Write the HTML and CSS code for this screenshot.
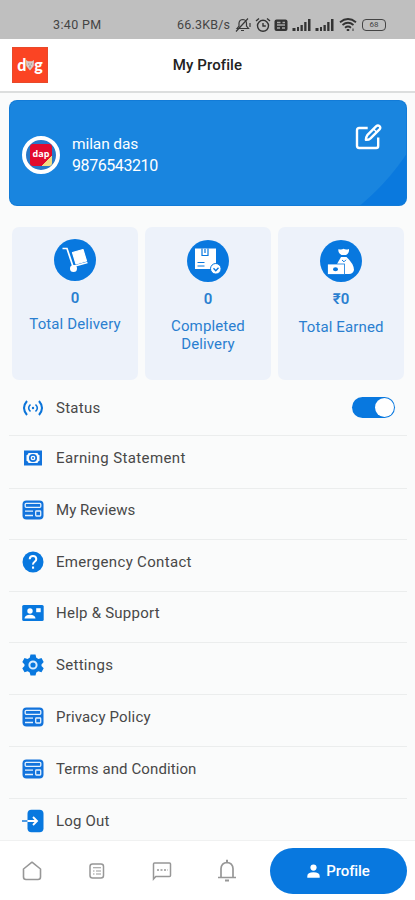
FILE: index.html
```html
<!DOCTYPE html>
<html lang="en">
<head>
<meta charset="utf-8">
<title>My Profile</title>
<link rel="stylesheet" href="styles.css">
</head>
<body>
<svg class="defs" width="0" height="0">
  <symbol id="signal" viewBox="0 0 19 13"><path d="M0 10h3v3H0zM4.500 9h2v4h-2zM8 7h2.300v6H8zM11.700 4H14v9h-2.300zM15.500 1h2.500v12h-2.500z" fill="#333"/></symbol>
  <symbol id="doc" viewBox="0 0 22 20"><rect x=".5" y=".5" width="21" height="19" rx="4" fill="#1273dc"/><g fill="none" stroke="#e4f1fd" stroke-width="1.300"><rect x="3.200" y="3.300" width="15.600" height="4" rx="1"/><path d="M3 11.200h8M3 15.500h8"/><rect x="13.700" y="11" width="5" height="5" rx=".7"/></g></symbol>
</svg>
<div class="phone">
  <div class="statusbar">
    <span class="clock">3:40 PM</span>
    <span class="speed">66.3KB/s</span>
    <div class="indicators">
      <svg width="17" height="16" viewBox="0 0 17 16" fill="none" stroke="#383838" stroke-width="1.200"><path d="M3 11.500 5 9V6q.5-3.500 4-3.500 3.500.2 3.500 4V9l2 2.500zM7 13.500h3M2 14.500 14 1.500M16 6v4"/></svg>
      <svg width="16" height="16" viewBox="0 0 16 16" fill="none" stroke="#333" stroke-width="1.400"><circle cx="8" cy="8.800" r="5.500"/><path d="M1 4 4 1.500M15 4 12 1.500M8 6v3h2.800"/></svg>
      <svg width="14" height="16" viewBox="0 0 14 16"><rect x=".5" y="2.500" width="13" height="11.500" rx="2" fill="#333"/><path d="M3 5.500h3.500M8.500 5.500H11M3 8h8M3 11h3M8 11h3" stroke="#aaa" stroke-width="1.300"/></svg>
      <svg width="20" height="13"><use href="#signal"/></svg>
      <svg width="20" height="13"><use href="#signal"/></svg>
      <svg width="18" height="15" viewBox="0 0 18 15" fill="none" stroke="#333" stroke-width="1.800"><path d="M1 5.200q8-6.500 16 0M3.500 8q5.500-4.500 11 0M6 10.700q3-2.400 6 0"/><path d="M9 12v2" stroke-width="2.500"/><path d="M14 11.500v2.500" stroke-width="1"/></svg>
      <div class="battery">68</div>
    </div>
  </div>
  <header class="header">
    <div class="logo"><span>d</span><svg width="8" height="12" viewBox="0 0 8 12"><path d="M0 1l2 1.200h4L8 1l-.3 6L4 11.500 .3 7z" fill="#d8c9c5"/><path d="M2.300 5h1M4.800 5h1M4 6.500v2" stroke="#6b5d5e" stroke-width=".8"/></svg><span>g</span></div>
    <h1>My Profile</h1>
  </header>
  <main>
    <section class="user">
      <div class="avatar"><div class="avatar-pic"><span>dap</span></div></div>
      <div class="who"><div class="name">milan das</div><div class="number">9876543210</div></div>
      <svg class="edit" width="28" height="28" viewBox="0 0 28 28" fill="none" stroke="#fff" stroke-width="2.400"><path d="M11.500 5H4.200Q2 5 2 7.200v15.600Q2 25 4.200 25h17q2 0 2-2v-7.200" stroke-linecap="square"/><path d="m12.300 12.200 9-9q1.600-1.500 3.200 0t0 3.200l-9 9q-1.800 1.700-4.600 1.500.1-3 1.400-4.700z" stroke-linejoin="round"/><path d="m18.500 6 3.300 3.300" stroke-width="1.300"/></svg>
    </section>
    <section class="stats">
      <article class="stat">
        <svg width="42" height="42" viewBox="0 0 42 42"><circle cx="21" cy="21" r="21" fill="#0878df"/><path d="m18.500 13.500 10.500-3 3.500 11.500-10.500 3z" fill="#fff" stroke="#fff" stroke-width="1.200" stroke-linejoin="round"/><path d="M8.500 9.500h4.500l6 18 14.500-4" fill="none" stroke="#fff" stroke-width="1.700"/><circle cx="19.500" cy="29.500" r="3.500" fill="#fff"/></svg>
        <strong>0</strong><p class="spread">Total Delivery</p>
      </article>
      <article class="stat mid">
        <svg width="42" height="42" viewBox="0 0 42 42"><circle cx="21" cy="21" r="21" fill="#0878df"/><path d="M8 8.500h21V29H8z" fill="#fff"/><path d="M15 8.500v7h6v-7M18 9v4" fill="none" stroke="#0878df" stroke-width="1.200"/><path d="M10.500 22.500h7M10.500 26h7" stroke="#0878df" stroke-width="1.200"/><circle cx="28.800" cy="28.800" r="5.300" fill="#fff" stroke="#0878df"/><path d="m26.500 28.300 2.300 2.500 2.700-3" fill="none" stroke="#0878df" stroke-width="1.300"/></svg>
        <strong>0</strong><p class="spread">Completed Delivery</p>
      </article>
      <article class="stat mid">
        <svg width="42" height="42" viewBox="0 0 42 42"><circle cx="21" cy="21" r="21" fill="#0878df"/><path d="M18.500 9q3 1.200 5-.3 2.300 1.500 5.500.3.500 4-3 6h-4.500q-4-2.500-3-6z" fill="#fff"/><path d="M21 17h5.500q7.500 7 7.500 13-1 4-5 4H17V24z" fill="#fff"/><path d="m22 20 2 1.800 2-2" fill="none" stroke="#0878df"/><rect x="7.500" y="24" width="17" height="10.500" fill="#fff" stroke="#0878df" stroke-width=".8"/><ellipse cx="15.500" cy="29.200" rx="2.500" ry="2" fill="#0878df"/></svg>
        <strong>₹0</strong><p class="spread">Total Earned</p>
      </article>
    </section>
    <ul class="menu">
      <li><svg width="22" height="20" viewBox="0 0 22 20" fill="none" stroke="#0b74d9"><path d="M5 3q-6 7 0 14M17 3q6 7 0 14" stroke-width="2"/><path d="M8.500 6.500q-3.700 3.500 0 7M13.500 6.500q3.700 3.500 0 7" stroke-width="1.600"/><circle cx="11" cy="10" r="1.200" fill="#0b74d9" stroke="none"/></svg><span class="t1">Status</span><i class="toggle"></i></li>
      <li><svg width="22" height="20" viewBox="0 0 22 20"><path d="M2 2.500h18v15H2z" fill="#1273dc"/><path d="M6.500 5h9q.3 2 2 2.200v5.600q-1.700.2-2 2.200h-9q-.3-2-2-2.200V7.200q1.700-.2 2-2.200z" fill="#fafbfb"/><circle cx="11" cy="10" r="3.200" fill="none" stroke="#1273dc" stroke-width="1.700"/><circle cx="11" cy="10" r="1" fill="#1273dc"/></svg><span class="t2">Earning Statement</span></li>
      <li><svg width="22" height="20"><use href="#doc"/></svg><span class="t3">My Reviews</span></li>
      <li><svg width="22" height="22" viewBox="0 0 22 22"><circle cx="11" cy="11" r="10.500" fill="#0878df"/><path d="M7.700 8.200q.2-3.200 3.300-3.200t3.300 3q0 1.500-1.700 2.700T11 13.600" fill="none" stroke="#fff" stroke-width="2"/><path d="M10 15.500h2.100v2.200H10z" fill="#fff"/></svg><span class="t4">Emergency Contact</span></li>
      <li><svg width="22" height="18" viewBox="0 0 22 18"><rect x=".2" y="1" width="21.500" height="16" rx="1.500" fill="#0878df"/><circle cx="8" cy="7" r="2.700" fill="#fff"/><path d="M2.500 14.500q.5-3.700 5.500-3.700t5.500 3.700z" fill="#fff"/><path d="M14.200 4.200h4.500v4h-4.500z" fill="#fff"/></svg><span class="t5">Help &amp; Support</span></li>
      <li><svg width="22" height="22" viewBox="0 0 22 22"><path d="M8.500.5h5l.8 3.200 2.200 1.300 3-.9 2.200 4-2.200 2.300v1.500l2.200 2.300-2.200 4-3.200-.9-2 1.200-.8 3h-5l-.8-3-2-1.200-3.200.9-2.200-4 2.200-2.300v-1.500L.3 8.100l2.200-4 3 .9 2.200-1.300z" fill="#0878df"/><circle cx="11" cy="11" r="3.600" fill="none" stroke="#d9edff" stroke-width="2"/></svg><span class="t6">Settings</span></li>
      <li><svg width="22" height="20"><use href="#doc"/></svg><span class="t7">Privacy Policy</span></li>
      <li><svg width="22" height="20"><use href="#doc"/></svg><span class="t8">Terms and Condition</span></li>
      <li><svg width="22" height="24" viewBox="0 0 22 24"><rect x="5.500" y=".7" width="16" height="22.600" rx="4" fill="#0878df"/><path d="M0 12h5.500" stroke="#2583dd" stroke-width="1.600"/><path d="M5.500 12h9M11 8l4 4-4 4" fill="none" stroke="#fff" stroke-width="1.900"/></svg><span class="t9">Log Out</span></li>
    </ul>
  </main>
  <nav class="nav">
    <a><svg width="20" height="20" viewBox="0 0 20 20" fill="none" stroke="#979797" stroke-width="1.600" stroke-linejoin="round"><path d="M1.500 8 10 1.200 18.500 8v8q0 2.500-2.500 2.500H4q-2.500 0-2.500-2.500z"/></svg></a>
    <a><svg width="16" height="16" viewBox="0 0 16 16" fill="none" stroke="#979797" stroke-width="1.500"><rect x="1" y="1" width="13.500" height="14" rx="2.500"/><path d="M4 4.800h8M4 8h1.500M7 8h5M4 11h1.500M7 11h5" stroke-width="1.100"/></svg></a>
    <a><svg width="20" height="20" viewBox="0 0 20 20" fill="none" stroke="#979797" stroke-width="1.500"><path d="M1.500 18V3q0-1 1-1h15q1 0 1 1v11.500q0 1-1 1H3.800z"/><path d="M5 9h11" stroke-dasharray="2 1.500" stroke-width="1.300"/></svg></a>
    <a><svg width="20" height="23" viewBox="0 0 20 23" fill="none" stroke="#979797" stroke-width="1.700"><path d="M4 18V9.500Q4.500 3.800 10 3.500q5.500.3 6 6V18M1 18.500h18"/><path d="M10 .8v3M8 21.500h4" stroke-width="2"/></svg></a>
    <a class="active"><svg width="13" height="14" viewBox="0 0 13 14"><circle cx="6.500" cy="3.600" r="3.100" fill="#fff"/><path d="M.3 13.800V12q.2-3.700 6.200-3.700t6.200 3.700v1.800z" fill="#fff"/></svg><span>Profile</span></a>
  </nav>
</div>
</body>
</html>
```

FILE: styles.css
```css
* { box-sizing: border-box; }
body { margin: 0; font-family: Roboto, "Noto Sans", sans-serif; background: #fafbfb; }
.defs { display: block; height: 0; }
svg { flex: none; display: block; }
.phone { width: 415px; height: 900px; overflow: hidden; display: flex; flex-direction: column; }

.statusbar { height: 39px; background: #bfbfbf; display: flex; align-items: center; padding: 10px 0 0 53px; font-size: 12.5px; color: #444; }
.clock { width: 124px; letter-spacing: .35px; }
.speed { width: 57px; letter-spacing: .2px; white-space: nowrap; }
.indicators { display: flex; align-items: center; gap: 3.5px; height: 16px; }
.battery { width: 24px; height: 12px; border: 1.5px solid #444; border-radius: 4px; font-size: 8px; line-height: 9px; text-align: center; margin-left: 2px; }

.header { height: 54px; flex: none; background: #fff; border-bottom: 2px solid #dcdede; display: grid; grid-template-columns: 36px 1fr 36px; align-items: center; padding: 0 12px; }
.logo { width: 36px; height: 36px; background: #fb4423; color: #fff; display: flex; align-items: center; justify-content: center; font: 900 16px/30px Lato, sans-serif; border: 1px solid #e8492a; }
h1 { margin: 0; text-align: center; font-size: 15px; font-weight: 500; letter-spacing: .1px; color: #222; }

main { flex: 1; min-height: 0; overflow: hidden; }
.user { margin: 7px 8px 0 9px; height: 106px; border-radius: 8px; background: linear-gradient(90deg, #1985df 50%, transparent 50%), radial-gradient(circle at 200px -78px, #1985df 237px, #0a79de 238px); display: flex; align-items: center; padding: 3px 24px 0 13px; color: #fff; box-shadow: inset 0 0 0 1px #127bd7; }
.avatar { width: 38px; height: 38px; border: 4px solid #fff; border-radius: 50%; background: #2878c8; display: flex; align-items: center; justify-content: center; }
.avatar-pic { width: 22px; height: 22px; border-radius: 3px; background: linear-gradient(135deg, #e30b2d 76%, #f3dc83 77%); font: bold 9px/20px "Open Sans", sans-serif; text-align: center; }
.who { margin-left: 12px; flex: 1; font-size: 16px; line-height: 21px; }
.name { font-size: 15.5px; letter-spacing: -.1px; }
.number { letter-spacing: -.42px; }
.edit { margin-bottom: 36px; }

.stats { margin: 21px 12px 0; display: grid; grid-template-columns: repeat(3, 126px); gap: 7px; }
.stat { height: 153px; border-radius: 7px; background: #edf2fa; padding-top: 12px; display: flex; flex-direction: column; align-items: center; color: #2a7fd0; }
.stat.mid { padding-top: 13px; }
.stat strong { font-size: 15px; line-height: 20px; margin-top: 7px; font-weight: 600; }
.stat p { margin: 7px 0 0; font-size: 15px; line-height: 18px; text-align: center; }
.stat.mid p { margin-top: 8px; }
.stat .spread { letter-spacing: .12px; }
.stat:last-child p { margin-top: 9px; }

.menu { list-style: none; margin: 0; padding: 0 8px 0 9px; display: grid; grid-template-rows: 56px 53px 51px 52px 51px 52px 52px 52px 52px; }
.menu li { display: flex; align-items: center; border-bottom: 1px solid #ebeded; padding: 0 12px 8px 12.5px; }
.menu li:first-child { padding-bottom: 0; }
.menu li:nth-child(2) { padding-bottom: 9px; }
.menu li:last-child { border: 0; padding-bottom: 8px; }
.menu span { margin-left: 12.5px; font-size: 15px; color: #484848; flex: 1; white-space: nowrap; }
.menu .t1 { letter-spacing: .25px; }
.menu .t2 { letter-spacing: .38px; }
.menu .t3 { letter-spacing: .05px; }
.menu .t4 { letter-spacing: .32px; }
.menu .t5 { letter-spacing: .24px; }
.menu .t6 { letter-spacing: .3px; }
.menu .t7 { letter-spacing: .17px; }
.menu .t8 { letter-spacing: .1px; }
.menu .t9 { letter-spacing: .18px; }
.toggle { width: 43px; height: 21px; border-radius: 11px; background: #0878df; padding: 1px; display: flex; justify-content: flex-end; }
.toggle::after { content: ""; width: 19px; height: 19px; border-radius: 50%; background: #fff; }

.nav { flex: none; height: 60px; background: #fff; border-top: 1px solid #f0f1f1; display: flex; align-items: center; padding-left: 22px; }
.nav a { width: 20px; margin-right: 45px; display: flex; justify-content: center; }
.nav a:nth-child(4) { margin-right: 33px; }
.nav .active { width: 137px; height: 46px; margin: 0; border-radius: 23px; background: #0878df; color: #fff; align-items: center; gap: 6px; font-size: 15px; font-weight: 500; letter-spacing: -.1px; }
```
